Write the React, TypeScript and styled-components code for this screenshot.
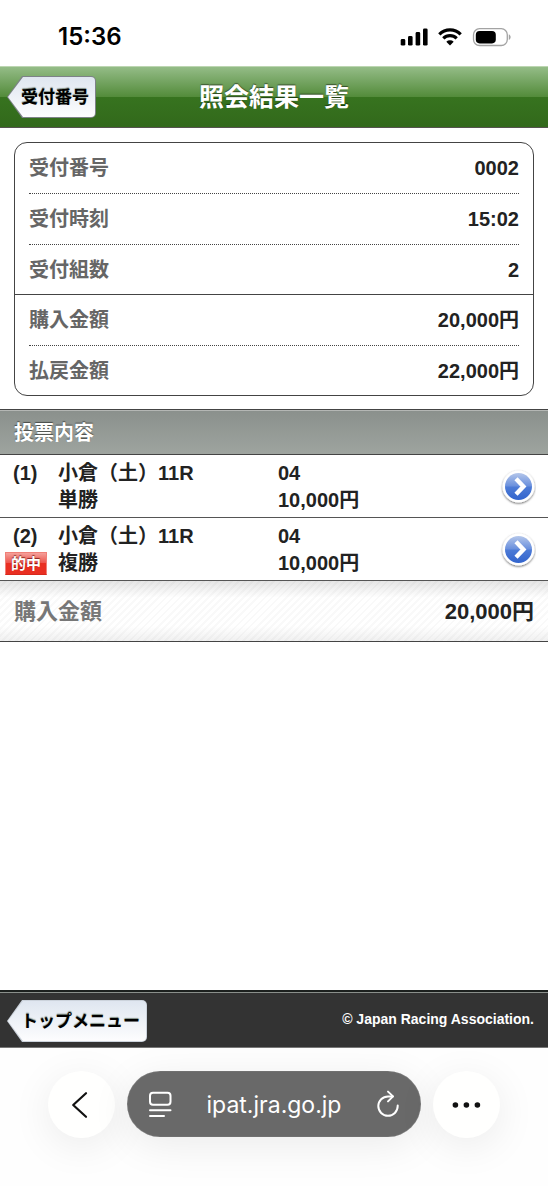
import React from "react";
import styled, { createGlobalStyle } from "styled-components";

const GlobalStyle = createGlobalStyle`
  *, *::before, *::after { box-sizing: border-box; }
  body {
    margin: 0;
    background: #fff;
    color: #222;
    font-family: "Liberation Sans", "Noto Sans CJK JP", sans-serif;
    font-weight: 700;
  }
  button { font: inherit; border: 0; padding: 0; cursor: pointer; }
  a { color: inherit; text-decoration: none; }
  svg { display: block; flex: none; }
`;

const Page = styled.div`
  display: flex;
  flex-direction: column;
  min-height: 100vh;
`;

const StatusBar = styled.div`
  display: flex;
  align-items: center;
  justify-content: space-between;
  height: 66px;
  padding: 8px 37px 0 58px;
  color: #000;
`;

const Clock = styled.time`
  font: 600 24px/32px Inter, sans-serif;
`;

const StatusIcons = styled.div`
  display: flex;
  align-items: center;
  gap: 10px;
`;

const TitleBar = styled.header`
  display: grid;
  grid-template-columns: 1fr auto 1fr;
  align-items: center;
  justify-items: start;
  height: 62px;
  padding: 0 7px;
  border-top: 1px solid #bcd6b1;
  border-bottom: 1px solid #55534f;
  background: linear-gradient(#94bc87 0, #538b3a 50%, #37731f 50%, #32691b 100%);
`;

const Title = styled.h1`
  margin: 0;
  font-size: 25px;
  line-height: 36px;
  color: #fff;
  text-shadow: 0 -1px 1px rgba(0, 0, 0, 0.5);
`;

const BackLink = styled.a`
  position: relative;
  isolation: isolate;
  display: flex;
  align-items: center;
  height: 42px;
  padding: 1px 7px 0 14px;
  border-radius: 0 5px 5px 0;
  background: #7d8288;
  clip-path: polygon(0 50%, 15px 0, 100% 0, 100% 100%, 15px 100%);
  color: #000;
  font-size: 17px;
  line-height: 24px;
  white-space: nowrap;
  text-shadow: 0 -1px 1px rgba(60, 80, 60, 0.6);

  &::before {
    content: "";
    position: absolute;
    z-index: -1;
    inset: 1px;
    border-radius: 0 4px 4px 0;
    background: linear-gradient(#dfe6f0, #fdfdfe);
    clip-path: polygon(0 50%, 15px 0, 100% 0, 100% 100%, 15px 100%);
  }
`;

const Main = styled.main`
  flex: 1;
`;

const Card = styled.section`
  margin: 14px 14px 13px;
  border: 1px solid #444;
  border-radius: 13px;
`;

const Group = styled.dl`
  margin: 0;
  padding: 0 14px;

  & + & { border-top: 1px solid #444; }
`;

const Field = styled.div`
  display: flex;
  align-items: center;
  justify-content: space-between;
  height: 51px;
  border-bottom: 1px dotted #444;
  font-size: 20px;
  line-height: 28px;

  &:last-child {
    height: 49px;
    border-bottom: 0;
  }
`;

const Label = styled.dt`
  color: #666;
`;

const Value = styled.dd`
  margin: 0;
`;

const SectionTitle = styled.h2`
  display: flex;
  align-items: center;
  height: 46px;
  margin: 0;
  padding: 2px 14px 0;
  border-top: 1px solid #444;
  border-bottom: 1px solid #444;
  background: linear-gradient(#8a908c, #9ea49f);
  box-shadow: inset 0 1px 0 #b4b7b4;
  color: #fff;
  font-size: 20px;
  line-height: 28px;
  text-shadow: 0 -1px 1px rgba(0, 0, 0, 0.5);
`;

const BetList = styled.ul`
  margin: 0;
  padding: 0;
  list-style: none;
`;

const BetLink = styled.a`
  display: grid;
  grid-template-columns: 53px 220px 1fr 36px;
  align-items: center;
  height: 63px;
  padding: 1px 12px 0 5px;
  border-bottom: 1px solid #555;
  font-size: 20px;
  line-height: 27px;
`;

const Lines = styled.span`
  display: flex;
  flex-direction: column;
  align-items: flex-start;
  height: 54px;
  white-space: nowrap;
`;

const Index = styled.span`
  padding-left: 8px;
`;

const HitBadge = styled.span`
  height: 23px;
  margin-top: 2px;
  padding: 0 5px;
  border: 1px solid #f08078;
  border-bottom-color: #d8281c;
  background: linear-gradient(#f4a09a 0, #ee5048 50%, #e92f22 50%, #e92f22 100%);
  color: #fff;
  font-size: 15px;
  line-height: 21px;
  text-shadow: 0 -1px 1px rgba(90, 0, 0, 0.7);
`;

const TotalBar = styled.div`
  display: flex;
  align-items: center;
  justify-content: space-between;
  height: 61px;
  padding: 1px 14px 0;
  border-bottom: 1px solid #444;
  background:
    linear-gradient(rgba(0, 0, 0, 0.1), transparent 28%, transparent 75%, rgba(0, 0, 0, 0.06)),
    repeating-linear-gradient(135deg, #fff 0 3px, #f9f9f9 3px 5px);
  font-size: 22px;
  line-height: 32px;
`;

const TotalLabel = styled.span`
  color: #777;
`;

const Footer = styled.footer`
  display: flex;
  align-items: center;
  justify-content: space-between;
  height: 58px;
  padding: 2px 14px 0 7px;
  border-top: 2px solid #1c201e;
  background: #333;
  box-shadow: inset 0 1px 0 #8a8f8b, inset 0 -1px 0 #777;
`;

const FooterLink = styled(BackLink)`
  background: #ccd3dc;
`;

const Copyright = styled.small`
  padding-bottom: 4px;
  color: #fff;
  font-size: 14px;
  line-height: 20px;
`;

const BrowserBar = styled.nav`
  display: flex;
  gap: 12px;
  height: 138px;
  padding: 23px 48px 0;
  background: #fefefe;
  overflow: hidden;
`;

const RoundButton = styled.button`
  display: grid;
  place-items: center;
  flex: none;
  width: 67px;
  height: 67px;
  border-radius: 50%;
  background: #fffffe;
  color: #111;
  box-shadow: 0 8px 40px rgba(0, 0, 0, 0.08);
`;

const AddressPill = styled.div`
  display: flex;
  flex: 1;
  align-items: center;
  justify-content: space-between;
  height: 66px;
  padding: 0 20px;
  border-radius: 33px;
  background: #696969;
  color: #fff;
  box-shadow: inset 0 0 1px #bbb, 0 8px 40px rgba(0, 0, 0, 0.08);
`;

const PillButton = styled.button`
  background: none;
  color: inherit;
`;

const Address = styled.button`
  background: none;
  color: inherit;
  && {
    padding-top: 2px;
    font: 400 23px/32px Inter, sans-serif;
  }
`;

const SignalIcon = () => (
  <svg width="28" height="18" viewBox="0 0 28 18" fill="currentColor" aria-hidden="true">
    <rect x="0.7" y="11" width="4.6" height="6.6" rx="1.4" />
    <rect x="8" y="8" width="4.6" height="9.6" rx="1.4" />
    <rect x="15.6" y="4" width="4.6" height="13.6" rx="1.4" />
    <rect x="23" y="0.4" width="4.6" height="17.2" rx="1.4" />
  </svg>
);

const WifiIcon = () => (
  <svg width="24" height="18" viewBox="0 0 24 18" aria-hidden="true">
    <g fill="none" stroke="currentColor" strokeWidth="3.2">
      <path d="M1.3 6.3a15.2 15.2 0 0 1 21.4 0" />
      <path d="M5.3 10.3a9.6 9.6 0 0 1 13.4 0" />
    </g>
    <path d="M12 17.6 8.3 13.8a5.4 5.4 0 0 1 7.4 0z" fill="currentColor" />
  </svg>
);

const BatteryIcon = () => (
  <svg width="39" height="19" viewBox="0 0 39 19" aria-hidden="true">
    <rect x="1.5" y=".7" width="33.8" height="16.8" rx="6" fill="none" stroke="#a3a3a3" strokeWidth="1.3" />
    <rect x="3.8" y="3" width="20" height="12.4" rx="3.8" fill="currentColor" />
    <path d="M36.8 6.2c2.4 1 2.4 4.8 0 5.8z" fill="#a3a3a3" />
  </svg>
);

const ArrowIcon = () => (
  <svg width="36" height="38" viewBox="0 0 36 38" aria-hidden="true">
    <defs>
      <linearGradient id="disc" x1="0" y1="0" x2="0" y2="1">
        <stop offset="0" stopColor="#b4c6ea" />
        <stop offset=".48" stopColor="#6a90dd" />
        <stop offset=".52" stopColor="#4d7bd6" />
        <stop offset="1" stopColor="#3264cd" />
      </linearGradient>
      <filter id="drop" x="-20%" y="-20%" width="140%" height="150%">
        <feDropShadow dx="0" dy="1" stdDeviation="1.2" floodColor="#000" floodOpacity=".6" />
      </filter>
    </defs>
    <circle cx="18.5" cy="18.5" r="16" fill="#fff" filter="url(#drop)" />
    <circle cx="18.5" cy="18.5" r="13.5" fill="url(#disc)" />
    <path d="m16 10.8 7.4 7.7-7.4 7.7" fill="none" stroke="#fff" strokeWidth="4.4" />
  </svg>
);

const ChevronIcon = () => (
  <svg width="24" height="28" viewBox="0 0 24 28" fill="none" stroke="currentColor" strokeWidth="2.2" strokeLinecap="round" strokeLinejoin="round" aria-hidden="true">
    <path d="M16 2.2 3.2 14 16 25.8" />
  </svg>
);

const ReaderIcon = () => (
  <svg width="26" height="28" viewBox="0 0 26 28" fill="none" stroke="currentColor" strokeWidth="2" strokeLinecap="round" aria-hidden="true">
    <rect x="3" y="2.8" width="20.5" height="12" rx="3" />
    <path d="M3 20.3h20.5M3 26h14" />
  </svg>
);

const ReloadIcon = () => (
  <svg width="26" height="28" viewBox="0 0 26 28" fill="none" stroke="currentColor" strokeWidth="2" strokeLinecap="round" strokeLinejoin="round" aria-hidden="true">
    <path d="M17.8 6.4H13a9.7 9.7 0 1 0 9.7 9.7v-.5" />
    <path d="m13 1.6 5 4.8-5 5" />
  </svg>
);

const DotsIcon = () => (
  <svg width="30" height="8" viewBox="0 0 30 8" fill="currentColor" aria-hidden="true">
    <circle cx="3.4" cy="4" r="2.8" />
    <circle cx="14.4" cy="4" r="2.8" />
    <circle cx="25.4" cy="4" r="2.8" />
  </svg>
);

const groups = [
  [
    ["受付番号", "0002"],
    ["受付時刻", "15:02"],
    ["受付組数", "2"],
  ],
  [
    ["購入金額", "20,000円"],
    ["払戻金額", "22,000円"],
  ],
];

const bets = [
  { no: 1, race: "小倉（土）11R", type: "単勝", pick: "04", amount: "10,000円", hit: false },
  { no: 2, race: "小倉（土）11R", type: "複勝", pick: "04", amount: "10,000円", hit: true },
];

export default function App() {
  return (
    <Page>
      <GlobalStyle />
      <StatusBar>
        <Clock>15:36</Clock>
        <StatusIcons>
          <SignalIcon />
          <WifiIcon />
          <BatteryIcon />
        </StatusIcons>
      </StatusBar>
      <TitleBar>
        <BackLink href="#receipts">受付番号</BackLink>
        <Title>照会結果一覧</Title>
      </TitleBar>
      <Main>
        <Card>
          {groups.map((fields, i) => (
            <Group key={i}>
              {fields.map(([label, value]) => (
                <Field key={label}>
                  <Label>{label}</Label>
                  <Value>{value}</Value>
                </Field>
              ))}
            </Group>
          ))}
        </Card>
        <SectionTitle>投票内容</SectionTitle>
        <BetList>
          {bets.map((bet) => (
            <li key={bet.no}>
              <BetLink href={`#bet-${bet.no}`}>
                <Lines>
                  <Index>({bet.no})</Index>
                  {bet.hit && <HitBadge>的中</HitBadge>}
                </Lines>
                <Lines>
                  <span>{bet.race}</span>
                  <span>{bet.type}</span>
                </Lines>
                <Lines>
                  <span>{bet.pick}</span>
                  <span>{bet.amount}</span>
                </Lines>
                <ArrowIcon />
              </BetLink>
            </li>
          ))}
        </BetList>
        <TotalBar>
          <TotalLabel>購入金額</TotalLabel>
          <span>20,000円</span>
        </TotalBar>
      </Main>
      <Footer>
        <FooterLink href="#top">トップメニュー</FooterLink>
        <Copyright>© Japan Racing Association.</Copyright>
      </Footer>
      <BrowserBar>
        <RoundButton aria-label="戻る"><ChevronIcon /></RoundButton>
        <AddressPill>
          <PillButton aria-label="ページメニュー"><ReaderIcon /></PillButton>
          <Address>ipat.jra.go.jp</Address>
          <PillButton aria-label="再読み込み"><ReloadIcon /></PillButton>
        </AddressPill>
        <RoundButton aria-label="その他"><DotsIcon /></RoundButton>
      </BrowserBar>
    </Page>
  );
}
